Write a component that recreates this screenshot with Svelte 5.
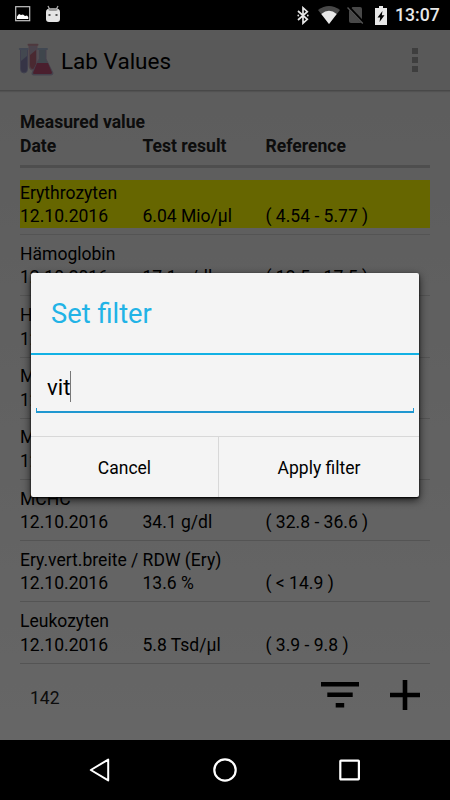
<script>
  let filter = 'vit';

  const values = [
    { name: 'Erythrozyten', date: '12.10.2016', result: '6.04 Mio/µl', reference: '( 4.54 - 5.77 )', marked: true },
    { name: 'Hämoglobin', date: '12.10.2016', result: '17.1 g/dl', reference: '( 13.5 - 17.5 )' },
    { name: 'Hämatokrit', date: '12.10.2016', result: '', reference: '' },
    { name: 'MCV', date: '12.10.2016', result: '', reference: '' },
    { name: 'MCH', date: '12.10.2016', result: '', reference: '' },
    { name: 'MCHC', date: '12.10.2016', result: '34.1 g/dl', reference: '( 32.8 - 36.6 )' },
    { name: 'Ery.vert.breite / RDW (Ery)', date: '12.10.2016', result: '13.6 %', reference: '( < 14.9 )' },
    { name: 'Leukozyten', date: '12.10.2016', result: '5.8 Tsd/µl', reference: '( 3.9 - 9.8 )' }
  ];
</script>

<div class="phone">
  <div class="status-bar">
    <div class="status-left">
      <svg width="16" height="16" viewBox="0 0 16 16">
        <rect x="0.7" y="0.7" width="14" height="14" fill="none" stroke="#c4c4c4" stroke-width="1.2" />
        <path d="M2 13V10.5L4 8L6 9L8 8.5L10 10L12 9.5L13.3 11V13Z" fill="#fff" />
      </svg>
      <svg width="16" height="18" viewBox="0 0 16 18">
        <path d="M3 1L5 5M13 1L11 5" stroke="#aaa" stroke-width="1.3" />
        <path d="M1 7Q1 3.5 5 3.5H11Q15 3.5 15 7V14Q15 17 12 17H4Q1 17 1 14Z" fill="#e4e4e4" />
        <path d="M3 5Q4 3 8 3T13 5L11 6H5Z" fill="#999" />
        <rect x="3.5" y="9" width="2" height="2" fill="#555" />
        <rect x="10.5" y="9" width="2" height="2" fill="#555" />
      </svg>
    </div>
    <div class="status-right">
      <svg class="bluetooth" width="12" height="19" viewBox="0 0 12 19">
        <path d="M1 5L10.3 13.3L6 17.2V1.8L10.3 5.7L1 14" fill="none" stroke="#e6e6e6" stroke-width="1.7" />
        <circle cx="1.3" cy="9.5" r="0.9" fill="#ddd" />
        <circle cx="10.8" cy="9.5" r="0.9" fill="#ddd" />
      </svg>
      <svg class="wifi" width="22" height="18" viewBox="0 0 22 18">
        <path d="M0 4Q11 -4 22 4L11 18Z" fill="#484848" />
        <path d="M3.3 8Q11 1.4 18.7 8L11 18Z" fill="#e8e8e8" />
      </svg>
      <svg class="no-sim" width="17" height="18" viewBox="0 0 17 18">
        <path d="M2 4.5L5.5 1H13Q15 1 15 3V16L13.5 17H4Q2 17 2 15Z" fill="#484848" />
        <path d="M1.5 1L16.5 17" stroke="#000" stroke-width="3" />
        <path d="M0.5 1.5L15.8 17.5" stroke="#555" stroke-width="1.3" />
      </svg>
      <svg class="battery" width="12" height="19" viewBox="0 0 12 19">
        <path d="M4 0H8V2H12V19H0V2H4Z" fill="#e8e8e8" />
        <path d="M7.5 5L2.5 11.5H5.2L4.5 16L9.5 9.3H6.8Z" fill="#000" />
      </svg>
      <span class="clock">13:07</span>
    </div>
  </div>

  <div class="app">
    <header>
      <svg class="logo" width="36" height="34" viewBox="0 0 36 34">
        <path d="M11 2H19V22Q19 27 15 27T11 22Z" fill="#b9a9bd" stroke="#c79fb2" />
        <path d="M12 12L18 7V22Q18 26 15 26T12 22Z" fill="#b9687c" />
        <rect x="9.5" y="0.7" width="11" height="2" rx="1" fill="#c48e9c" />
        <path d="M2.5 6H9.5V26Q9.5 30 6 30T2.5 26Z" fill="#a7b3c7" stroke="#a09fc4" />
        <path d="M3 18L9 13V26Q9 29.3 6 29.3T3 26Z" fill="#8882b0" />
        <rect x="0.8" y="5" width="10" height="2" rx="1" fill="#a4b0cd" />
        <path d="M21 6H28V16L35 30Q35 32 33 32H15.5Q13.5 32 14 30L21 16Z" fill="#9fafbd" stroke="#b0a2c2" />
        <path d="M19 20H30L34 29.5Q34 31 32.5 31H16.5Q14.5 31 15.3 29Z" fill="#b94f74" />
        <rect x="19" y="5" width="11" height="2" rx="1" fill="#a4b3cd" />
      </svg>
      <h1>Lab Values</h1>
      <div class="overflow">
        <i></i><i></i><i></i>
      </div>
    </header>

    <main>
      <div class="table-head">
        <div>Measured value</div>
        <div class="columns">
          <span>Date</span>
          <span>Test result</span>
          <span>Reference</span>
        </div>
      </div>

      {#each values as value}
        <div class="row">
          <div class="entry" class:marked={value.marked}>
            <div>{value.name}</div>
            <div class="columns">
              <span>{value.date}</span>
              <span>{value.result}</span>
              <span>{value.reference}</span>
            </div>
          </div>
        </div>
      {/each}
    </main>

    <footer>
      <span class="count">142</span>
      <svg width="38" height="26" viewBox="0 0 38 26">
        <path d="M0 0H38V4.5H0ZM6.3 10.5H31.7V15H6.3ZM14.7 21H23.2V25.5H14.7Z" />
      </svg>
      <svg width="30" height="30" viewBox="0 0 30 30">
        <path d="M12.7 0H17.3V12.7H30V17.3H17.3V30H12.7V17.3H0V12.7H12.7Z" />
      </svg>
    </footer>

    <div class="scrim">
      <div class="dialog">
        <h2>Set filter</h2>
        <div class="dialog-body">
          <div class="field">
            <span>{filter}</span><span class="caret"></span>
          </div>
        </div>
        <div class="buttons">
          <button>Cancel</button>
          <button>Apply filter</button>
        </div>
      </div>
    </div>
  </div>

  <nav>
    <svg width="22" height="26" viewBox="0 0 22 26">
      <path d="M1.8 13L19.2 2.6V23.4Z" fill="none" stroke="#fff" stroke-width="2" stroke-linejoin="round" />
    </svg>
    <svg width="24" height="26" viewBox="0 0 24 26">
      <circle cx="12" cy="13" r="10.7" fill="none" stroke="#fff" stroke-width="2.2" />
    </svg>
    <svg width="22" height="26" viewBox="0 0 22 26">
      <rect x="1.3" y="3.7" width="18.6" height="18.6" rx="0.6" fill="none" stroke="#fff" stroke-width="2.2" />
    </svg>
  </nav>
</div>

<style>
  :global(body) {
    background: #000;
  }

  .phone {
    display: flex;
    flex-direction: column;
    width: 450px;
    height: 800px;
    overflow: hidden;
    background: #000;
    font-family: Roboto, sans-serif;
  }

  svg {
    display: block;
    flex: none;
  }

  .status-bar {
    display: flex;
    justify-content: space-between;
    height: 30px;
  }

  .status-left,
  .status-right {
    display: flex;
    align-items: center;
  }

  .status-left {
    gap: 14px;
    padding-left: 15px;
    padding-bottom: 2px;
  }

  .status-right {
    padding-right: 10px;
  }

  .wifi {
    margin-left: 9px;
  }

  .no-sim {
    margin-left: 7px;
  }

  .battery {
    margin-left: 11px;
  }

  .clock {
    margin-left: 8px;
    width: 45px;
    color: #e8e8e8;
    font-size: 17.6px;
    font-weight: 500;
    line-height: 32px;
    white-space: nowrap;
  }

  .app {
    position: relative;
    display: flex;
    flex-direction: column;
    height: 710px;
    background: linear-gradient(#e6e6e6, #fff);
  }

  header {
    display: flex;
    align-items: center;
    box-sizing: border-box;
    height: 61px;
    padding: 0 32px 0 18px;
    background: #dedede;
    border-bottom: 1px solid #b4b4b4;
    box-shadow: 0 1px 1px #ccc;
  }

  h1 {
    flex: 1;
    margin: 2px 0 0 7px;
    font-size: 22.5px;
    font-weight: 400;
  }

  .overflow {
    display: flex;
    flex-direction: column;
    gap: 3.3px;
  }

  .overflow i {
    width: 6px;
    height: 6px;
    background: #9c9c9c;
  }

  main {
    padding: 20px 20px 0;
    color: #222;
    font-size: 17.55px;
    line-height: 23.7px;
  }

  .columns {
    display: grid;
    grid-template-columns: 122.5px 123px 1fr;
    white-space: nowrap;
  }

  .table-head {
    box-sizing: border-box;
    height: 57px;
    margin-bottom: 12px;
    border-bottom: 3px solid #c4c4c4;
    font-weight: 700;
  }

  .row {
    box-sizing: border-box;
    height: 55.2px;
    margin-bottom: 6px;
    border-bottom: 1px solid #d2d2d2;
  }

  .entry {
    box-sizing: border-box;
    height: 47.6px;
    padding-top: 1.6px;
    color: #000;
  }

  .marked {
    background: #ff0;
  }

  footer {
    display: flex;
    align-items: center;
    height: 50px;
    padding: 0 30px;
    font-size: 17.55px;
  }

  .count {
    flex: 1;
    color: #222;
    padding-top: 6px;
  }

  footer svg + svg {
    margin-left: 31px;
  }

  .scrim {
    position: absolute;
    inset: 0;
    background: rgba(0, 0, 0, 0.6);
  }

  .dialog {
    width: 388px;
    height: 224px;
    margin: 243px 0 0 31px;
    display: flex;
    flex-direction: column;
    background: #f4f4f4;
    border-radius: 2px;
    box-shadow: 0 1px 2px #000, 0 3px 9px rgba(0, 0, 0, 0.75);
  }

  h2 {
    box-sizing: border-box;
    height: 82px;
    margin: 0;
    padding-left: 20px;
    border-bottom: 2px solid #12b1e4;
    color: #22b3e6;
    font-size: 27.3px;
    font-weight: 400;
    line-height: 83px;
  }

  .dialog-body {
    flex: 1;
    padding: 14px 5px 0;
  }

  .field {
    display: flex;
    align-items: center;
    box-sizing: border-box;
    height: 44px;
    padding: 0 0 9px 11px;
    font-size: 22.2px;
    background:
      linear-gradient(#1f97d0, #1f97d0) left bottom / 100% 2px no-repeat,
      linear-gradient(#1f97d0, #1f97d0) left bottom / 1px 5px no-repeat,
      linear-gradient(#1f97d0, #1f97d0) right bottom / 1px 5px no-repeat;
  }

  .caret {
    width: 1px;
    height: 31px;
    margin-left: -0.5px;
    background: #777;
  }

  .buttons {
    display: flex;
    height: 61px;
    box-sizing: border-box;
    border-top: 1px solid #d8d8d8;
  }

  button {
    flex: 1;
    padding: 1px 0 0;
    border: 0;
    background: none;
    color: #000;
    font-family: inherit;
    font-size: 17.5px;
  }

  button:first-child {
    flex: 0 0 188px;
    border-right: 1px solid #d8d8d8;
  }

  nav {
    display: flex;
    align-items: center;
    justify-content: space-between;
    height: 60px;
    padding: 0 89px 0 89px;
  }
</style>
